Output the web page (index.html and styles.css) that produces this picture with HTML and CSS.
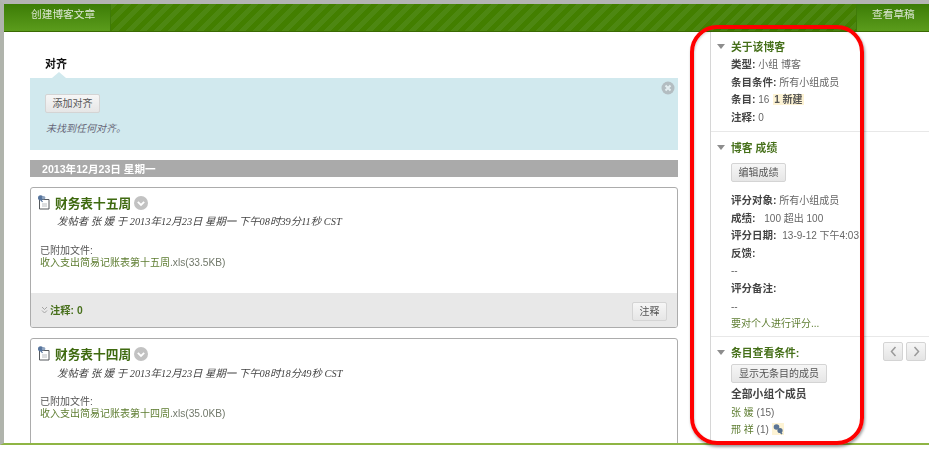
FILE: index.html
```html
<!DOCTYPE html>
<html lang="zh">
<head>
<meta charset="utf-8">
<title>博客</title>
<link rel="stylesheet" href="styles.css">
</head>
<body>
<div class="frame">
  <header class="topbar">
    <a class="tab tab-left">创建博客文章</a>
    <a class="tab tab-right">查看草稿</a>
  </header>
  <div class="columns">
    <main class="content">
      <div class="align-label">对齐</div>
      <section class="align-panel">
        <svg class="close" width="14" height="14" viewBox="0 0 14 14"><circle cx="7" cy="7" r="6.5" fill="#b3bdc1"/><path d="M4.5 4.5l5 5M9.5 4.5l-5 5" stroke="#e4eef1" stroke-width="2"/></svg>
        <button class="btn btn-add">添加对齐</button>
        <p class="none">未找到任何对齐。</p>
      </section>
      <div class="date-bar">2013年12月23日 星期一</div>
      <article class="entry">
        <div class="entry-body">
          <h2 class="entry-title">
            <svg class="doc" width="13" height="15" viewBox="0 0 13 15"><path d="M2.5 4.5h9.5v9.5h-9.5z" fill="#fff" stroke="#55595d"/><path d="M5 9h5M5 11h5" stroke="#b8bcc0"/><circle cx="3.6" cy="2.8" r="2.6" fill="#56749c"/><circle cx="6.6" cy="2.8" r="1.8" fill="#8fa4bf"/><path d="M4 5l1.5 2" stroke="#56749c" stroke-width="1.2"/></svg>
            <span>财务表十五周</span>
            <svg class="chev" width="14" height="14" viewBox="0 0 14 14"><circle cx="7" cy="7" r="7" fill="#c2c2c2"/><path d="M3.8 5.8L7 9l3.2-3.2" fill="none" stroke="#fff" stroke-width="1.8"/></svg>
          </h2>
          <p class="meta">发帖者 张 媛 于 2013年12月23日 星期一 下午08时39分11秒 CST</p>
          <p class="attach">已附加文件:<br><a class="file">收入支出简易记账表第十五周</a><span class="ext">.xls(33.5KB)</span></p>
        </div>
        <footer class="entry-foot">
          <span class="comments"><svg class="dbl" width="7" height="8" viewBox="0 0 7 8"><path d="M1 1l2.5 2.5L6 1M1 4.5L3.5 7 6 4.5" fill="none" stroke="#a5a5a5"/></svg>注释: 0</span>
          <button class="btn btn-comment">注释</button>
        </footer>
      </article>
      <article class="entry entry-open">
        <div class="entry-body">
          <h2 class="entry-title">
            <svg class="doc" width="13" height="15" viewBox="0 0 13 15"><path d="M2.5 4.5h9.5v9.5h-9.5z" fill="#fff" stroke="#55595d"/><path d="M5 9h5M5 11h5" stroke="#b8bcc0"/><circle cx="3.6" cy="2.8" r="2.6" fill="#56749c"/><circle cx="6.6" cy="2.8" r="1.8" fill="#8fa4bf"/><path d="M4 5l1.5 2" stroke="#56749c" stroke-width="1.2"/></svg>
            <span>财务表十四周</span>
            <svg class="chev" width="14" height="14" viewBox="0 0 14 14"><circle cx="7" cy="7" r="7" fill="#c2c2c2"/><path d="M3.8 5.8L7 9l3.2-3.2" fill="none" stroke="#fff" stroke-width="1.8"/></svg>
          </h2>
          <p class="meta meta-second">发帖者 张 媛 于 2013年12月23日 星期一 下午08时18分49秒 CST</p>
          <p class="attach attach-second">已附加文件:<br><a class="file">收入支出简易记账表第十四周</a><span class="ext">.xls(35.0KB)</span></p>
        </div>
      </article>
    </main>
    <aside class="side">
      <section class="block block-about">
        <h3 class="block-title"><i class="tri"></i>关于该博客</h3>
        <div class="row"><b>类型:</b> 小组 博客</div>
        <div class="row"><b>条目条件:</b> 所有小组成员</div>
        <div class="row"><b>条目:</b> 16 <b class="new">1 新建</b></div>
        <div class="row"><b>注释:</b> 0</div>
      </section>
      <section class="block block-grade">
        <h3 class="block-title"><i class="tri"></i>博客 成绩</h3>
        <button class="btn btn-grade">编辑成绩</button>
        <div class="row"><b>评分对象:</b> 所有小组成员</div>
        <div class="row"><b>成绩:</b> <span class="shifted-wide">100 超出 100</span></div>
        <div class="row"><b>评分日期:</b> <span class="shifted">13-9-12 下午4:03</span></div>
        <div class="row"><b>反馈:</b></div>
        <div class="row">--</div>
        <div class="row"><b>评分备注:</b></div>
        <div class="row">--</div>
        <div class="row"><a class="link">要对个人进行评分...</a></div>
      </section>
      <section class="block block-view">
        <div class="pager">
          <button class="page-btn"><svg width="7" height="11" viewBox="0 0 7 11"><path d="M5.5 1L1.5 5.5 5.5 10" fill="none" stroke="#999" stroke-width="1.5"/></svg></button>
          <button class="page-btn"><svg width="7" height="11" viewBox="0 0 7 11"><path d="M1.5 1l4 4.5-4 4.5" fill="none" stroke="#999" stroke-width="1.5"/></svg></button>
        </div>
        <h3 class="block-title"><i class="tri"></i>条目查看条件:</h3>
        <button class="btn btn-show">显示无条目的成员</button>
        <div class="row"><b class="members">全部小组个成员</b></div>
        <div class="row"><a class="link">张 媛</a> (15)</div>
        <div class="row"><a class="link">邢 祥</a> (1) <svg class="user" width="12" height="12" viewBox="0 0 12 12"><rect width="12" height="12" fill="#fdf3d4"/><circle cx="4.5" cy="4" r="2.8" fill="#5b7596"/><circle cx="8" cy="7.5" r="2.6" fill="#56708f"/><path d="M8 9l2 2" stroke="#56708f" stroke-width="1.6"/></svg></div>
      </section>
    </aside>
  </div>
  <div class="callout"></div>
</div>
</body>
</html>
```

FILE: styles.css
```css
* { box-sizing: border-box; }
html, body { margin: 0; padding: 0; background: #fff; }
body {
  width: 929px;
  height: 459px;
  overflow: hidden;
  font-family: "Liberation Sans", "Noto Sans CJK SC", sans-serif;
  font-size: 11px;
  color: #666;
}
.frame {
  position: relative;
  width: 929px;
  height: 445px;
  background: #fff;
  border-top: 4px solid #b4b4b4;
  border-left: 4px solid #b0b4ac;
  border-bottom: 2px solid #8fb544;
}
.topbar {
  display: flex;
  justify-content: space-between;
  height: 28px;
  background: repeating-linear-gradient(135deg, #437f00 0 5px, #4d8712 5px 10px);
  border-bottom: 1px solid #3a6a02;
  filter: blur(.3px);
}
.tab {
  display: flex;
  align-items: center;
  height: 27px;
  padding-bottom: 8px;
  color: #dbe6d2;
  font-size: 10.7px;
  background: linear-gradient(#3c7c06, #5b9c1c);
}
.tab-left { width: 107px; padding-left: 27px; border-right: 1px solid #3f7a08; }
.tab-right { width: 73px; padding-left: 15px; border-left: 1px solid #3f7a08; }
.columns { display: flex; height: 411px; overflow: hidden; filter: blur(.3px); }
.content { width: 706px; padding: 0 32px 0 26px; flex: none; }
.align-label {
  height: 46px;
  padding: 24px 0 0 15px;
  line-height: 16px;
  font-weight: 700;
  color: #111;
}
.align-panel {
  position: relative;
  height: 72px;
  margin-bottom: 10px;
  padding: 16px 15px 0;
  background: #d1e9ee;
}
.align-panel::before {
  content: "";
  position: absolute;
  top: -6px;
  left: 22px;
  border: solid transparent;
  border-width: 0 7px 6px;
  border-bottom-color: #d1e9ee;
}
.close { position: absolute; top: 3px; right: 3px; }
.btn {
  display: block;
  height: 19px;
  padding: 0;
  border: 1px solid #d4d4d4;
  border-radius: 2px;
  background: linear-gradient(#f6f6f6, #e6e6e6);
  font: 10px/17px "Liberation Sans", "Noto Sans CJK SC", sans-serif;
  color: #555;
  white-space: nowrap;
}
.btn-add { width: 55px; }
.none {
  margin: 8px 0 0 1px;
  line-height: 16px;
  font-size: 10px;
  font-style: italic;
  color: #667;
}
.date-bar {
  height: 17px;
  margin-bottom: 10px;
  padding-left: 12px;
  background: #aaa;
  color: #fff;
  font-size: 10.6px;
  font-weight: 700;
  line-height: 18px;
}
.entry {
  height: 141px;
  margin-bottom: 10px;
  border: 1px solid #acacac;
  border-radius: 3px;
  background: #fff;
  display: flex;
  flex-direction: column;
}
.entry-open { height: 130px; margin-bottom: 0; }
.entry-body { flex: 1; padding: 6px 9px 0; }
.entry-title {
  display: flex;
  align-items: center;
  gap: 5px;
  height: 17px;
  margin: 0;
  font-size: 12.7px;
  font-weight: 700;
  color: #3f6a10;
}
.doc { margin-left: -3px; flex: none; }
.chev { margin-left: -2px; flex: none; margin-top: 1px; }
.meta {
  margin: 3px 0 0 17px;
  line-height: 16px;
  font-family: "Liberation Serif", "Noto Sans CJK SC", serif;
  font-size: 10.4px;
  font-style: italic;
  color: #444;
}
.meta-second { margin-top: 4px; }
.attach { margin: 15px 0 0 0; line-height: 12px; font-size: 10px; color: #555; }
.attach-second { margin-top: 14px; }
.file { color: #5d7c30; }
.ext { color: #71786a; font-size: 10.2px; }
.entry-foot {
  display: flex;
  align-items: center;
  justify-content: space-between;
  height: 34px;
  padding: 0 10px;
  background: #e8e8e8;
  border-radius: 0 0 2px 2px;
}
.comments { font-size: 10.3px; font-weight: 700; color: #48701c; margin-top: -2px; }
.dbl { margin-right: 2px; }
.btn-comment { width: 35px; margin-top: 2px; }
.side {
  flex: none;
  width: 219px;
  border-left: 1px solid #d6d6d6;
}
.block { position: relative; padding: 0 0 0 20px; border-bottom: 1px solid #e8e8e8; }
.block-about { height: 100px; padding-top: 7px; }
.block-grade { height: 205px; padding-top: 8px; }
.block-view { padding-top: 8px; border-bottom: 0; }
.block-title {
  position: relative;
  margin: 0;
  height: 17px;
  line-height: 17px;
  font-size: 10.8px;
  font-weight: 700;
  color: #46701a;
}
.tri {
  position: absolute;
  left: -14px;
  top: 5px;
  border: solid transparent;
  border-width: 5px 4.5px 0;
  border-top-color: #8d8d8d;
}
.row { height: 17.6px; line-height: 17.6px; font-size: 10px; color: #666; white-space: nowrap; }
.row b { font-size: 10.5px; color: #444; }
.row .new { font-size: 10px; color: #555; background: #fdf3d4; padding: 0 1px; margin-left: 1px; }
.row .members { font-size: 10.8px; }
.shifted { margin-left: 3px; }
.shifted-wide { margin-left: 6px; }
.link { color: #5d7c30; }
.btn-grade { width: 55px; margin: 6px 0 10px; }
.btn-show { width: 96px; margin: 2px 0 3px; }
.pager {
  position: absolute;
  top: 5px;
  right: 3px;
  display: flex;
  gap: 3px;
}
.page-btn {
  display: flex;
  align-items: center;
  justify-content: center;
  width: 20px;
  height: 19px;
  padding: 0;
  border: 1px solid #d4d4d4;
  border-radius: 2px;
  background: linear-gradient(#f6f6f6, #e4e4e4);
}
.user { vertical-align: -2px; }
.callout {
  position: absolute;
  left: 686px;
  top: 21px;
  width: 174px;
  height: 420px;
  border: 4.5px solid #f00;
  border-radius: 27px;
  box-shadow: 1px 2px 3px rgba(0, 0, 0, .4), inset 1px 1px 2px rgba(0, 0, 0, .15);
  pointer-events: none;
}
```
